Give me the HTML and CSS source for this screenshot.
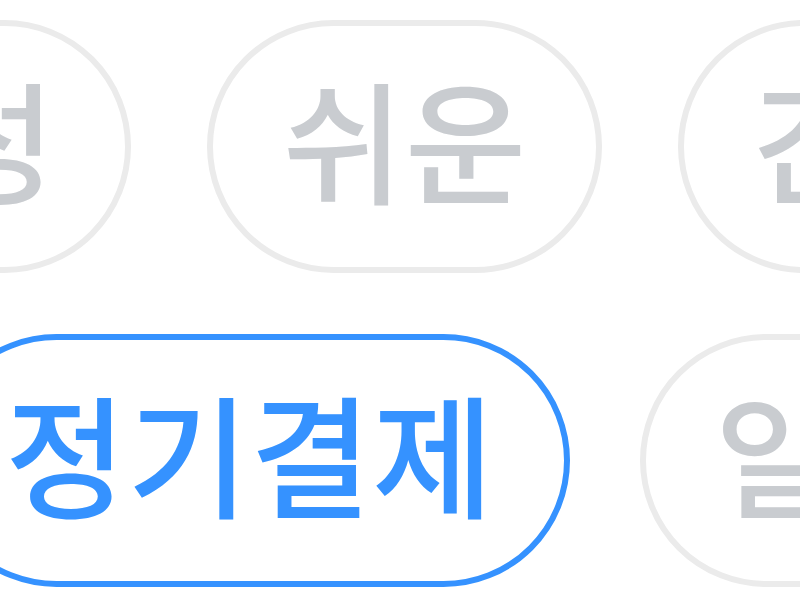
FILE: index.html
```html
<!DOCTYPE html>
<html lang="ko">
<head>
  <meta charset="UTF-8" />
  <meta name="viewport" content="width=device-width, initial-scale=1.0" />
  <title>키워드</title>
  <link rel="stylesheet" href="styles.css">
</head>
<body>
  <div class="chips">
    <div class="chip-row row-1">
      <div class="chip">안정성</div>
      <div class="chip">쉬운</div>
      <div class="chip">간편</div>
    </div>
    <div class="chip-row row-2">
      <div class="chip active">정기결제</div>
      <div class="chip">일시불</div>
    </div>
  </div>
</body>
</html>
```

FILE: styles.css
```css
body {
  margin: 0;
  background: #ffffff;
  font-family: "Noto Sans CJK KR", "Noto Sans", sans-serif;
  width: 800px;
  height: 600px;
  overflow: hidden;
}
.chips {
  display: flex;
  flex-direction: column;
  gap: 61px;
  padding-top: 20px;
}
.chip-row {
  display: flex;
  gap: 76px;
  white-space: nowrap;
}
.row-1 {
  margin-left: -386px;
}
.row-2 {
  gap: 70px;
  margin-left: -70px;
}
.chip {
  flex: none;
  box-sizing: border-box;
  height: 253px;
  display: flex;
  align-items: center;
  padding: 0 69px 20px;
  border: 6px solid #ebebeb;
  border-radius: 999px;
  font-size: 132px;
  font-weight: 500;
  letter-spacing: 1px;
  line-height: 1;
  color: #c9ccd0;
}
.chip.active {
  border: 6px solid #3592ff;
  color: #3592ff;
}
```
